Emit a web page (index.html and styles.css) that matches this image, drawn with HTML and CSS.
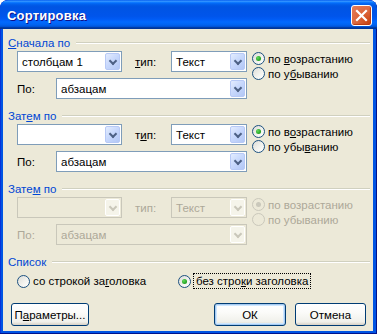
FILE: index.html
```html
<!DOCTYPE html>
<html lang="ru">
<head>
    <meta charset="UTF-8">
    <title>Сортировка</title>
    <link rel="stylesheet" href="styles.css">
</head>
<body>

<div class="window">
    <div class="titlebar">
        <span class="title">Сортировка</span>
        <button class="close-btn" aria-label="Закрыть">
            <svg width="13" height="13" viewBox="0 0 13 13"><path d="M2 2 L11 11 M11 2 L2 11" stroke="#fff" stroke-width="2.2" stroke-linecap="square"/></svg>
        </button>
    </div>

    <div class="client">
        <div class="group">
            <div class="group-head"><span class="legend"><u>С</u>начала по</span><span class="rule"></span></div>
            <div class="group-body">
                <div class="fields">
                    <div class="row">
                        <div class="combo w-col"><span class="value">столбцам 1</span><span class="drop"></span></div>
                        <span class="lbl lbl-type"><u>т</u>ип:</span>
                        <div class="combo w-type"><span class="value">Текст</span><span class="drop"></span></div>
                    </div>
                    <div class="row">
                        <span class="lbl lbl-by">По:</span>
                        <div class="combo w-by"><span class="value">абзацам</span><span class="drop"></span></div>
                    </div>
                </div>
                <div class="radios">
                    <label class="radio"><span class="dot checked"></span><span>по <u>в</u>озрастанию</span></label>
                    <label class="radio"><span class="dot"></span><span>по у<u>б</u>ыванию</span></label>
                </div>
            </div>
        </div>

        <div class="group">
            <div class="group-head"><span class="legend">Зат<u>е</u>м по</span><span class="rule"></span></div>
            <div class="group-body">
                <div class="fields">
                    <div class="row">
                        <div class="combo w-col"><span class="value"></span><span class="drop"></span></div>
                        <span class="lbl lbl-type">т<u>и</u>п:</span>
                        <div class="combo w-type"><span class="value">Текст</span><span class="drop"></span></div>
                    </div>
                    <div class="row">
                        <span class="lbl lbl-by">По:</span>
                        <div class="combo w-by"><span class="value">абзацам</span><span class="drop"></span></div>
                    </div>
                </div>
                <div class="radios">
                    <label class="radio"><span class="dot checked"></span><span>по в<u>о</u>зрастанию</span></label>
                    <label class="radio"><span class="dot"></span><span>по убы<u>в</u>анию</span></label>
                </div>
            </div>
        </div>

        <div class="group disabled">
            <div class="group-head"><span class="legend">Зате<u>м</u> по</span><span class="rule"></span></div>
            <div class="group-body">
                <div class="fields">
                    <div class="row">
                        <div class="combo w-col"><span class="value"></span><span class="drop"></span></div>
                        <span class="lbl lbl-type">тип:</span>
                        <div class="combo w-type"><span class="value">Текст</span><span class="drop"></span></div>
                    </div>
                    <div class="row">
                        <span class="lbl lbl-by">По:</span>
                        <div class="combo w-by"><span class="value">абзацам</span><span class="drop"></span></div>
                    </div>
                </div>
                <div class="radios">
                    <label class="radio"><span class="dot checked"></span><span>по возрастанию</span></label>
                    <label class="radio"><span class="dot"></span><span>по убыванию</span></label>
                </div>
            </div>
        </div>

        <div class="list-group">
            <div class="group-head"><span class="legend">Список</span><span class="rule"></span></div>
            <div class="list-row">
                <label class="radio first"><span class="dot"></span><span>со строкой за<u>г</u>оловка</span></label>
                <label class="radio second"><span class="dot checked"></span><span class="focus">без стро<u>к</u>и заголовка</span></label>
            </div>
        </div>

        <div class="buttons">
            <button class="btn btn-params">П<u>а</u>раметры...</button>
            <button class="btn btn-ok">ОК</button>
            <button class="btn btn-cancel">Отмена</button>
        </div>
    </div>
</div>

</body>
</html>
```

FILE: styles.css
```css
* {
    box-sizing: border-box;
    margin: 0;
    padding: 0;
}
body {
    width: 377px;
    height: 334px;
    font-family: 'Liberation Sans', Arial, sans-serif;
    font-size: 11px;
    color: #000;
    background: #fff;
}
u {
    text-decoration: underline;
    text-underline-offset: 1px;
}
.window {
    width: 377px;
    height: 334px;
    display: flex;
    flex-direction: column;
    background: #0054e3;
    border-radius: 8px 8px 0 0;
    box-shadow: inset -1px -1px #00138c, inset 1px 1px #0831d9;
    overflow: hidden;
}
.titlebar {
    height: 29px;
    flex: none;
    display: flex;
    align-items: center;
    justify-content: space-between;
    padding: 0 5px 0 7px;
    background: linear-gradient(#0058ee 0%, #3593ff 4%, #288eff 6%, #127dff 8%, #036ffc 10%, #0262ee 14%, #0057e5 20%, #0054e3 24%, #0055eb 56%, #005bf5 66%, #026afe 76%, #0062ef 86%, #0052d6 92%, #0040ab 94%, #003092 100%);
    border-radius: 8px 8px 0 0;
}
.title {
    color: #fff;
    font-family: 'Liberation Sans', Arial, sans-serif;
    font-weight: bold;
    font-size: 13px;
    letter-spacing: 0.2px;
    text-shadow: 1px 1px #0f1089;
    margin-top: 1px;
}
.close-btn {
    width: 21px;
    height: 21px;
    margin-top: 2px;
    border: 1px solid #fff;
    border-radius: 3px;
    background: radial-gradient(circle at 85% 85%, #cc4614 0%, #dc6539 45%, #e57e5d 100%);
    display: flex;
    align-items: center;
    justify-content: center;
    box-shadow: inset -1px -1px 1px #b83a12;
}
.client {
    flex: 1;
    margin: 0 4px 3px 3px;
    background: #ece9d8;
    padding-top: 7px;
    display: flex;
    flex-direction: column;
}
.group {
    height: 73px;
    flex: none;
}
.group-head {
    height: 14px;
    display: flex;
    align-items: center;
    padding-left: 5px;
    padding-right: 3px;
}
.legend {
    color: #0046d5;
    font-size: 11.5px;
    line-height: 14px;
    white-space: nowrap;
}
.rule {
    flex: 1;
    height: 2px;
    margin-left: 6px;
    border-top: 1px solid #d0d0bf;
    border-bottom: 1px solid #fff;
}
.group-body {
    display: flex;
    padding-left: 14px;
    margin-top: 1px;
}
.fields {
    display: flex;
    flex-direction: column;
    gap: 6px;
}
.row {
    display: flex;
    align-items: center;
    height: 21px;
}
.lbl {
    white-space: nowrap;
    font-size: 11.5px;
}
.lbl-type {
    margin-left: 13px;
    width: 36px;
}
.lbl-by {
    width: 39px;
}
.combo {
    height: 21px;
    display: flex;
    align-items: center;
    justify-content: space-between;
    background: #fff;
    border: 1px solid #7f9db9;
    padding: 1px;
}
.w-col {
    width: 105px;
}
.w-type {
    width: 76px;
}
.w-by {
    width: 191px;
}
.value {
    padding-left: 3px;
    white-space: nowrap;
    font-size: 11.5px;
}
.drop {
    width: 15px;
    height: 17px;
    border: 1px solid #b7c9f6;
    border-radius: 2px;
    background: linear-gradient(135deg, #e3ecfe 0%, #c6d7fc 50%, #b2c7f5 100%);
    position: relative;
}
.drop::after {
    content: '';
    position: absolute;
    left: 4px;
    top: 4px;
    width: 4px;
    height: 4px;
    border-right: 2px solid #4d6185;
    border-bottom: 2px solid #4d6185;
    transform: rotate(45deg);
}
.radios {
    margin-left: 5px;
    display: flex;
    flex-direction: column;
    gap: 2px;
    padding-top: 1px;
}
.radio {
    display: flex;
    align-items: center;
    height: 13px;
    white-space: nowrap;
    font-size: 11.5px;
}
.dot {
    width: 13px;
    height: 13px;
    flex: none;
    border: 1px solid #1c5180;
    border-radius: 50%;
    background: linear-gradient(135deg, #dcdcd7 0%, #f4f4f0 60%, #fff 100%);
    margin-right: 3px;
    display: flex;
    align-items: center;
    justify-content: center;
}
.dot.checked::after {
    content: '';
    width: 5px;
    height: 5px;
    border-radius: 50%;
    background: radial-gradient(circle at 35% 35%, #61d85b, #21a121 70%, #1a8a1a);
}
.disabled .lbl,
.disabled .value,
.disabled .radio {
    color: #aca899;
}
.disabled .combo {
    background: #ece9d8;
    border-color: #c9c7ba;
}
.disabled .drop {
    background: #f5f4ea;
    border-color: #fff;
}
.disabled .drop::after {
    border-color: #c9c7ba;
}
.disabled .dot {
    border-color: #cac8bb;
    background: #ece9d8;
}
.disabled .dot.checked::after {
    background: #cac8bb;
}
.list-group {
    height: 48px;
    flex: none;
}
.list-row {
    display: flex;
    align-items: center;
    height: 18px;
    margin-top: 3px;
}
.list-row .radio {
    height: 18px;
}
.radio.first {
    margin-left: 14px;
    width: 161px;
}
.focus {
    border: 1px dotted #000;
    padding: 1px 2px;
    margin-left: -1px;
}
.buttons {
    display: flex;
    padding-left: 8px;
}
.btn {
    height: 23px;
    font-family: 'Liberation Sans', Arial, sans-serif;
    font-size: 11.5px;
    color: #000;
    border: 1px solid #003c74;
    border-radius: 3px;
    background: linear-gradient(#fff 0%, #fbfbf9 40%, #f0f0ea 85%, #d6d0c5 100%);
    cursor: pointer;
}
.btn-params {
    width: 78px;
}
.btn-ok {
    width: 72px;
    margin-left: 125px;
    box-shadow: inset 0 0 0 1px #a6caf0, inset 0 0 0 2px #cee7ff;
}
.btn-cancel {
    width: 71px;
    margin-left: 9px;
}
```
